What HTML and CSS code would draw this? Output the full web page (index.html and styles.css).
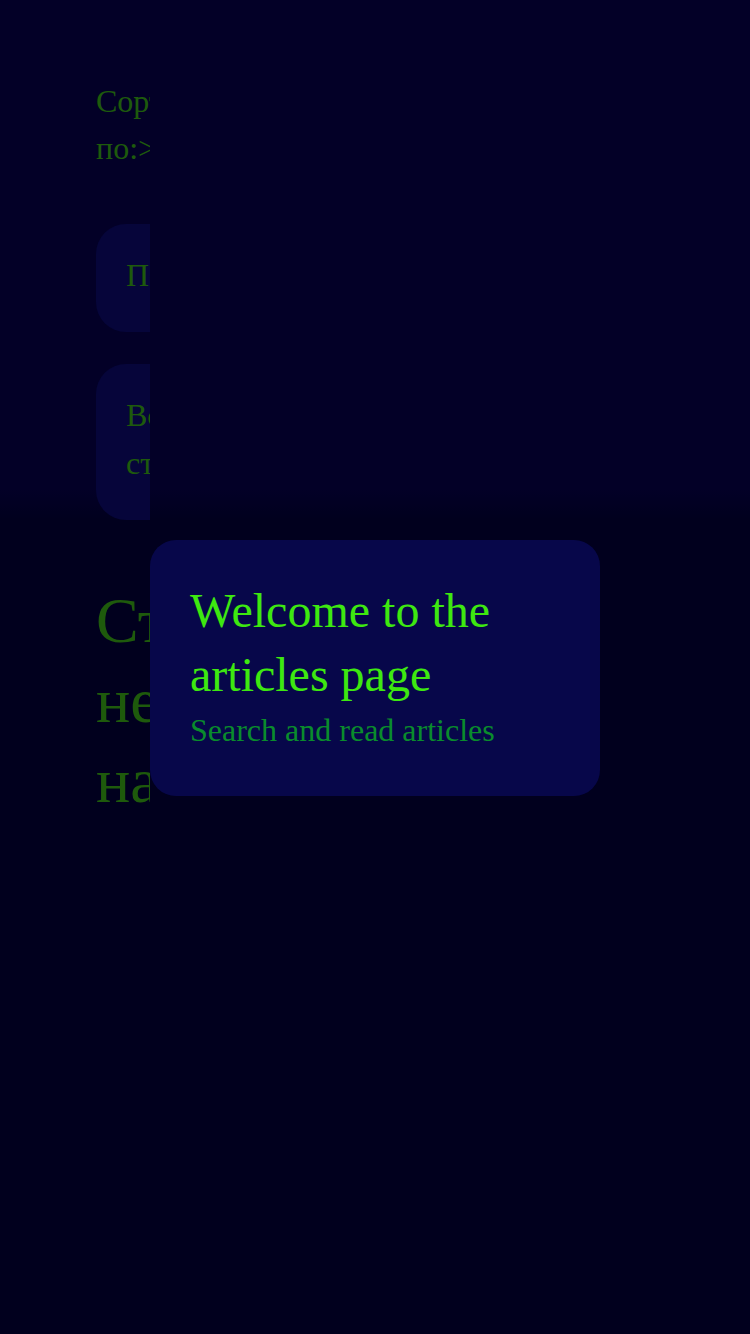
FILE: index.html
```html
<!DOCTYPE html>
<html lang="ru">
<head>
<meta charset="utf-8">
<title>Статьи</title>
<link rel="stylesheet" href="styles.css">
</head>
<body>
<main class="page">
  <div class="column">
    <div class="sort">Сортировка по:&gt;</div>
    <div class="cards">
      <div class="card">Популярные</div>
      <div class="card">Все статьи</div>
    </div>
    <h2 class="empty">Статьи не найдены</h2>
  </div>
</main>
<div class="overlay">
  <div class="modal">
    <h1 class="modal-title">Welcome to the articles page</h1>
    <p class="modal-sub">Search and read articles</p>
  </div>
</div>
</body>
</html>
```
FILE: styles.css
```css
html, body {
  margin: 0;
  padding: 0;
}
body {
  min-height: 1334px;
  font-family: "Liberation Serif", "Times New Roman", serif;
  background: linear-gradient(to bottom, #06004e 0, #06004e 490px, #02003c 520px, #02003c 100%);
  color: #3cb418;
}
.page {
  padding: 78px 0 0 96px;
}
.column {
  width: 54px;
  overflow: hidden;
}
.sort {
  font-size: 32px;
  line-height: 47px;
}
.cards {
  margin-top: 52px;
  display: flex;
  flex-direction: column;
  gap: 32px;
  width: 140px;
}
.card {
  background: #0c0a74;
  border-radius: 30px;
  padding: 27px 30px 33px;
  font-size: 32px;
  line-height: 48px;
  width: 60px;
}
.empty {
  margin: 61px 0 0 0;
  font-weight: normal;
  font-size: 64px;
  line-height: 80px;
}
.overlay {
  position: fixed;
  inset: 0;
  background: rgba(0, 0, 0, 0.5);
  display: flex;
  align-items: center;
  justify-content: center;
}
.modal {
  width: 450px;
  box-sizing: border-box;
  padding: 39px 40px 43px;
  background: #07074a;
  border-radius: 26px;
  transform: translateY(1px);
}
.modal-title {
  margin: 0;
  font-weight: normal;
  font-size: 48px;
  line-height: 64px;
  color: #3ee810;
}
.modal-sub {
  margin: 0;
  font-size: 32px;
  line-height: 46px;
  color: #0a8c2c;
}
```
